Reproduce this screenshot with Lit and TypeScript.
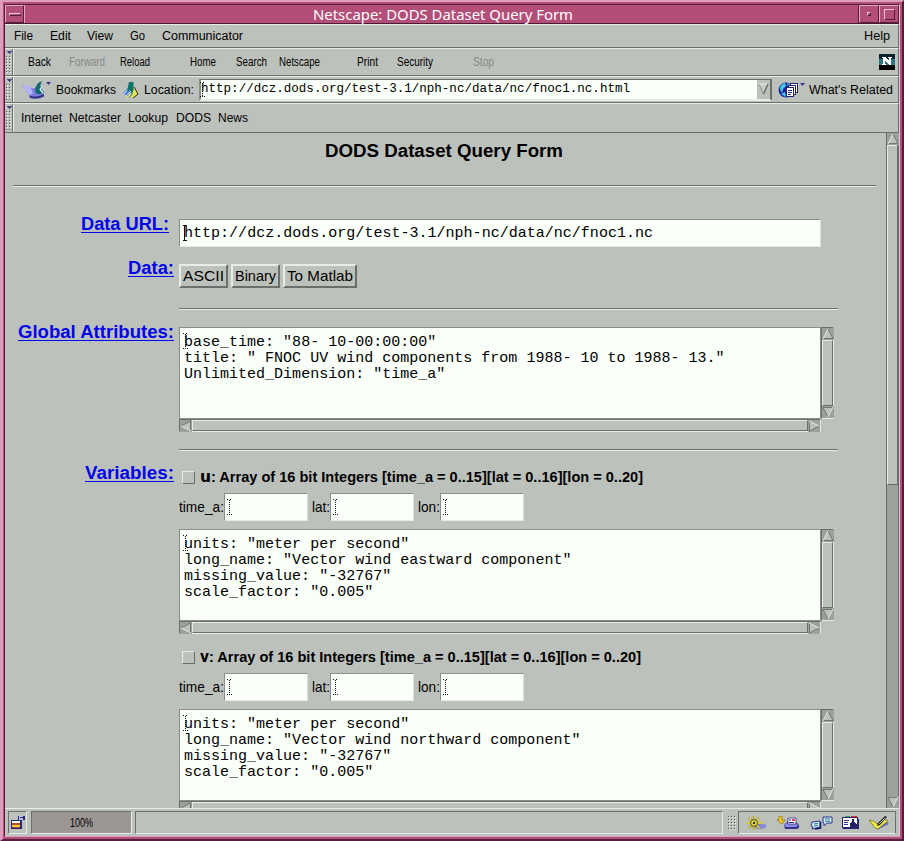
import { LitElement, html, svg, css } from "lit";
import { customElement, property } from "lit/decorators.js";
import { styleMap } from "lit/directives/style-map.js";

/** A single line of text set to an exact advance width. */
@customElement("fit-text")
class FitText extends LitElement {
  @property({ type: Number }) w = 0;
  @property() text = "";
  static styles = css`
    :host { display: inline-block; white-space: pre; flex: none; overflow: visible; text-align: left; }
    .run { display: inline-block; transform-origin: 0 50%; }
  `;
  updated() {
    const run = this.renderRoot.querySelector(".run") as HTMLElement;
    this.style.width = this.w + "px";
    run.style.transform = "none";
    const n = run.getBoundingClientRect().width;
    if (n) run.style.transform = `scaleX(${this.w / n})`;
  }
  render() {
    return html`<span class="run">${this.text}</span>`;
  }
}

const t = (text: string, w: number, cls = "") =>
  html`<fit-text class=${cls} .text=${text} .w=${w}></fit-text>`;

const arrow = (dir: number) => html`<svg width="12" height="12" viewBox="0 0 12 12">
  <rect width="12" height="12" fill="#9da19c"/>
  <g transform="rotate(${dir} 6 6)">
    <path d="M6 1 L11 11 H1Z" fill="#bdc1bb"/>
    <path d="M6 1 L11 10.500 H1" stroke="#737772" fill="none"/>
    <path d="M6 1 L1 11" stroke="#e4e8e2" fill="none"/>
  </g></svg>`;

const beam = (h: number) => html`<svg class="beam" width="5" height=${h} viewBox="0 0 5 ${h}" shape-rendering="crispEdges">
  <path d="M0 .5H2M3 .5H5M0 ${h - 0.5}H5M2.5 1V${h - 1}" stroke="#111" stroke-dasharray="1 1" fill="none"/></svg>`;

const hardBeam = html`<svg class="beam" width="5" height="16" viewBox="0 0 5 16" shape-rendering="crispEdges">
  <path d="M0 .5H4M0 15.5H4M1.500 0V16" stroke="#111" fill="none"/></svg>`;

const grip = (h: number) => html`<svg class="grip" width="9" height=${h} viewBox="0 0 9 ${h}" shape-rendering="crispEdges">
  <path d="M1 2H7L4 5Z" fill="#46468c"/>
  ${[1, 4].map((x) => svg`<path d="M${x + 0.5} 7V${h - 2}" stroke="#555955" stroke-dasharray="1 2"/><path d="M${x + 1.5} 8V${h - 2}" stroke="#eef2ec" stroke-dasharray="1 2"/>`)}
  <path d="M7.5 0V${h}" stroke="#6b6f6b"/><path d="M8.5 0V${h}" stroke="#e8ece6"/></svg>`;

const bookmarks = html`<svg width="30" height="20" viewBox="0 0 30 20">
  <path d="M0 5L8 7Q10 9 13 8L18 5L22 14Q15 19 8 16L4 11Z" fill="#7f7fe2"/>
  <path d="M0 5L8 6.500L11 13L8 15L4 11Z" fill="#b4b4fa"/>
  <path d="M7 15.500Q15 18 22 14V16.500Q15 20 8 18Z" fill="#34348c"/>
  <path d="M13 10Q14 3 20 1L17.500 7L22 4L19 9L22 12L19 14Q13 15 13 10Z" fill="#0e6b70"/>
  <path d="M21 5L18 9.500L21 13" fill="none" stroke="#e8f4f4" stroke-width="1.200"/>
  <path d="M24 2H29L26.500 5Z" fill="#34348c"/></svg>`;

const locationIcon = html`<svg width="16" height="18" viewBox="0 0 16 18">
  <path d="M7 5L11 5L15 13L10 17L6 15Z" fill="#eee84a"/>
  <path d="M0 12L5 7L10 13L6 17Z" fill="#4c7cdc"/>
  <path d="M1 13L5 8M3 15L8 10" stroke="#dceaff" stroke-width="1"/>
  <path d="M4 17L8 12" stroke="#eee84a" stroke-width="1.500"/>
  <path d="M6 1H10.500V9L9 13L7 9L4 10Z" fill="#08746c"/>
  <path d="M11 6L15 13L10 17" stroke="#222" fill="none"/></svg>`;

const related = html`<svg width="28" height="18" viewBox="0 0 28 18">
  <circle cx="8" cy="9" r="7.500" fill="#2424a0"/>
  <path d="M2 8Q2 3 7 2L8 5L5 8L4 12Z" fill="#3ecbe0"/><path d="M9 2L13 4L10 6Z" fill="#3ecbe0"/>
  <path d="M3 13L7 11L8 16Z" fill="#3ecbe0"/>
  <g fill="#fff" stroke="#25256c" shape-rendering="crispEdges">
    <rect x="12.500" y="2.500" width="7" height="9"/><rect x="10.500" y="4.500" width="7" height="9"/><rect x="8.500" y="6.500" width="7" height="9"/>
    <path d="M10 9.500H14M10 11.500H14M10 13.500H13"/>
  </g>
  <path d="M22 2H27L24.500 5Z" fill="#34348c"/></svg>`;

const logo = html`<svg width="16" height="16" viewBox="0 0 16 16" shape-rendering="crispEdges">
  <rect width="16" height="16" fill="#06222c"/><path d="M0 5H16V11H0Z" fill="#2d7580"/><path d="M0 11H16V16H0Z" fill="#000"/>
  <path d="M3 3H7L10 7V4H9V3H13V4H12V11H10L6 6V10H7V11H3V10H4V4H3Z" fill="#fff"/></svg>`;

const lock = html`<svg width="17" height="15" viewBox="0 0 17 15" shape-rendering="crispEdges">
  <path d="M9 6V2H14V5" fill="none" stroke="#26267c" stroke-width="2"/><path d="M9.500 5V1.500H13" fill="none" stroke="#b9c6ff"/>
  <rect x="1" y="5" width="11" height="9" fill="#26267c"/><rect x="2" y="6" width="8" height="2" fill="#fff"/>
  <rect x="2" y="8" width="8" height="2" fill="#c04a28"/><rect x="2" y="10" width="8" height="2" fill="#ecd040"/><rect x="2" y="12" width="8" height="1" fill="#b04020"/></svg>`;

const navigatorIcon = html`<svg width="22" height="14" viewBox="0 0 22 14">
  <ellipse cx="15" cy="10" rx="6.500" ry="3" fill="#8a8ad8"/>
  <g stroke="#6b6618" stroke-width="2.200"><path d="M9 0V14M1 7H18M3.500 2L14.500 12M14.500 2L3.500 12"/></g>
  <g stroke="#f4ea4e" stroke-width="1.300" fill="none"><path d="M9 0V14M1 7H18M3.500 2L14.500 12M14.500 2L3.500 12"/></g>
  <circle cx="9" cy="7" r="3.500" fill="none" stroke="#6b6618"/>
  <circle cx="9" cy="7" r="1.300" fill="#333"/></svg>`;

const inboxIcon = html`<svg width="23" height="14" viewBox="0 0 23 14">
  <path d="M7 9L11 5H18L22 9V12L20 13H8Z" fill="#34348c"/><path d="M7 9L10 7H18L21 9L19 11H9Z" fill="#8c8ce4"/>
  <path d="M11 2H19V8H11Z" fill="#fff" stroke="#34348c" stroke-width=".8"/>
  <path d="M15 3H18V5H15Z" fill="#df3b69"/><path d="M12 4H14M12 6.500H17" stroke="#34348c"/>
  <path d="M2 0H5V4H8L5 8L0 4H2Z" fill="#f7cd23" stroke="#7c5b00" stroke-width=".6"/></svg>`;

const newsIcon = html`<svg width="23" height="14" viewBox="0 0 23 14">
  <path d="M2 6L10 5V11L6 12L2 13L3 11L1 10Z" fill="#cfe9ff" stroke="#34348c"/>
  <path d="M4 8L8 7.500M4 10L8 9.500" stroke="#247c80"/><path d="M10.500 6V12L5 13" stroke="#171766" fill="none" stroke-width="1.500"/>
  <path d="M13 1H22V7H17L14 10V7H13Z" fill="#cfe9ff" stroke="#34348c"/><path d="M15 3H20M15 5.300H20" stroke="#247c80"/></svg>`;

const addressIcon = html`<svg width="17" height="13" viewBox="0 0 17 13" shape-rendering="crispEdges">
  <path d="M3 0H8V2H3Z" fill="#3ca070"/><path d="M9 0H15V2H9Z" fill="#e52828"/>
  <rect x=".5" y="1.500" width="15" height="10" fill="#fff" stroke="#26266c"/><path d="M1 12.500H17M16.500 3V12" stroke="#26266c"/>
  <path d="M2 4.500H7M2 6.500H6M2 8.500H6" stroke="#3434a0"/><path d="M10 3H12V6H13L15 9V11H8V9L9 6H10Z" fill="#222264"/></svg>`;

const composerIcon = html`<svg width="21" height="14" viewBox="0 0 21 14">
  <path d="M6 11L9 13.500L20 8L17 5Z" fill="#6a6ac4"/>
  <path d="M0 4L5 5L8 8L15 3L19 5L9 13L6 12Z" fill="#eee844" stroke="#51501a" stroke-width=".6"/>
  <path d="M8 10L9 7L16 0L18 1L11 9Z" fill="#222"/><path d="M10 8L16 2" stroke="#eee" stroke-width=".8"/></svg>`;

const vScroll = () => html`<div class="vs">${arrow(0)}<i class="thumb"></i>${arrow(180)}</div>`;
const hScroll = () => html`<div class="hsb">${arrow(270)}<i class="thumb"></i>${arrow(90)}</div>`;

const textArea = (lines: string[]) => html`<div class="area">
  <div class="areatop"><div class="text">${beam(16)}${lines.map((l) => html`<div class="line">${t(l, l.length * 9.01)}</div>`)}</div>${vScroll()}</div>
  ${hScroll()}</div>`;

const dims = html`<div class="dims">
  ${t("time_a:", 45)}<span class="small">${beam(16)}</span>
  ${t("lat:", 18, "gap")}<span class="small">${beam(16)}</span>
  ${t("lon:", 22, "gap")}<span class="small">${beam(16)}</span></div>`;

const variable = (name: string, nameW: number, direction: string) => html`
  <div class="var"><span class="check"></span>${t(name, nameW, "vname")}${t(": Array of 16 bit Integers [time_a = 0..15][lat = 0..16][lon = 0..20]", 432, "vdesc")}</div>
  ${dims}
  ${textArea(['units: "meter per second"', `long_name: "Vector wind ${direction} component"`, 'missing_value: "-32767"', 'scale_factor: "0.005"'])}`;

/** Items are laid out left to right: [label, start, width]. */
type Item = [string, number, number, boolean?];
const run = (items: Item[], from: number) => {
  let x = from;
  return items.map(([label, start, w, off]) => {
    const gap = start - x;
    x = start + w;
    return html`<span class=${off ? "off" : ""} style=${styleMap({ marginLeft: gap + "px" })}>${t(label, w)}</span>`;
  });
};

@customElement("app-root")
class AppRoot extends LitElement {
  static styles = css`
    * { box-sizing: border-box; }
    :host { display: block; width: 904px; height: 841px; overflow: hidden; background: #b34e78; color: #000;
      font: 12px/16px "Liberation Sans", Arial, sans-serif; }
    svg { display: block; flex: none; }
    .frame { width: 904px; height: 841px; border: solid; border-width: 2px 2px 2px 3px;
      border-color: #dca0bc #561e3c #561e3c #dc9cba; background: #b34e78; }
    .win { width: 896px; height: 833px; margin: 2px 0 0 1px; border: solid; border-width: 1px; border-color: #561e3c #ecc4d6 #dca0bc #561e3c;
      display: flex; flex-direction: column; background: #bdc1bb; }
    .title { height: 19px; flex: none; display: flex; background: #b34e78; color: #fff; border-bottom: 1px solid #4c1c34;
      font: 14px/19px "Noto Sans", sans-serif; }
    .title .name { flex: 1; display: flex; padding-left: 288px; border-left: 1px solid #e3aac4; border-right: 1px solid #561e3c; }
    .tb { width: 19px; flex: none; border: 1px solid; border-color: #e3aac4 #561e3c #561e3c #e3aac4; display: grid; place-items: center; }
    .tb.r { width: 20px; }
    .dash { width: 12px; height: 3px; border: 1px solid; border-color: #f0c6d8 #561e3c #561e3c #f0c6d8; }
    .dot { width: 4px; height: 4px; border: 1px solid; border-color: #f0c6d8 #561e3c #561e3c #f0c6d8; }
    .max { width: 11px; height: 11px; border: 1px solid; border-color: #f0c6d8 #561e3c #561e3c #f0c6d8; }
    .bar { flex: none; display: flex; align-items: center; border-top: 1px solid #e8ece6; border-bottom: 1px solid #6b6f6b; border-right: 1px solid #6b6f6b; }
    .menu { height: 24px; }
    .tools { height: 28px; } .loc { height: 27px; } .pers { height: 30px; }
    .off { color: #858984; }
    .fill { flex: 1; }
    .url { width: 573px; height: 22px; display: flex; align-items: center; background: #fbfffa; border: solid; border-width: 1px 2px 2px 2px; border-color: #6b6f6b #6b6f6b #e8ece6 #8b8f8a;
      font: 12.5px/18px "Liberation Mono", monospace; position: relative; }
    .url .beam { left: -1px; top: 2px; }
    .drop { margin-left: auto; width: 13px; height: 19px; background: #bdc1bb; display: grid; place-items: center; }
    .body { flex: 1; min-height: 0; display: flex; }
    .page { width: 881px; overflow: hidden; }
    .heading { height: 52px; padding: 7px 0 0 320px; font: bold 18px/22px "Liberation Sans", sans-serif; }
    .rule { height: 2px; border-top: 1px solid #6b6f6b; border-bottom: 1px solid #e8ece6; }
    .page > .rule { margin: 0 10px 0 8px; }
    .grid { display: grid; grid-template-columns: 169px 659px; column-gap: 5px; padding-top: 26px; }
    .lab { display: flex; justify-content: flex-end; font: bold 18px/22px "Liberation Sans", sans-serif; color: #0404ea; }
    .lab.first { padding-right: 5px; }
    .lab a { display: flex; height: 20px; border-bottom: 1px solid #0404ea; }
    .r1 { height: 44px; padding-top: 6px; }
    .r2 { height: 64px; padding-top: 7px; }
    .r2 .rule { margin-top: 20px; }
    .r3 { height: 141px; padding-top: 6px; }
    .r3 .rule { margin-top: 17px; }
    .sep { height: 8px; }
    .big { width: 642px; height: 28px; background: #fbfffa; border: 1px solid #8b8f8a; border-right-color: #dde1db; border-bottom-color: #e8ece6;
      font: 15px/28px "Liberation Mono", monospace; padding-left: 4px; position: relative; display: flex; }
    .beam { position: absolute; left: 3px; top: 5px; }
    .btns { display: flex; gap: 3px; height: 24px; font-size: 15px; line-height: 20px; }
    .btn { border: 2px solid; border-color: #e8ece6 #6b6f6b #6b6f6b #e8ece6; padding: 0 2px; height: 24px; display: flex; }
    .area { width: 655px; height: 105px; }
    .areatop { display: flex; height: 92px; }
    .text { position: relative; width: 642px; background: #fbfffa; border: 1px solid #8b8f8a; padding: 7px 0 0 4px; font: 15px/16px "Liberation Mono", monospace; }
    .line { height: 16px; display: flex; }
    .vs { width: 13px; border: 1px solid #6b6f6b; border-right-color: #e8ece6; border-bottom-color: #e8ece6; background: #9da19c; display: flex; flex-direction: column; }
    .hsb { width: 642px; height: 13px; border: 1px solid #6b6f6b; border-right-color: #e8ece6; border-bottom-color: #e8ece6; background: #9da19c; display: flex; }
    .thumb { flex: 1; background: #bdc1bb; border: 1px solid; border-color: #e8ece6 #6b6f6b #6b6f6b #e8ece6; }
    .var { height: 31px; display: flex; align-items: baseline; font-weight: bold; font-size: 14.500px; line-height: 24px; padding: 3px 0 0 3px; }
    .vname { font: bold 16.500px/24px "DejaVu Sans", sans-serif; margin-left: 5px; }
    .check { width: 13px; height: 13px; align-self: flex-start; margin-top: 6px; border: 1px solid; border-color: #e8ece6 #6b6f6b #6b6f6b #e8ece6; }
    .dims { display: flex; height: 28px; margin-bottom: 8px; font-size: 15px; line-height: 28px; }
    .small { position: relative; width: 84px; height: 28px; background: #fbfffa; border: 1px solid #8b8f8a; border-right-color: #dde1db; border-bottom-color: #e8ece6; }
    .small .beam { left: 2px; top: 5px; }
    .gap { margin-left: 4px; }
    .main { width: 13px; border: 1px solid #6b6f6b; border-width: 0 1px; background: #9da19c; display: flex; flex-direction: column; }
    .main .thumb { flex: none; height: 340px; }
    .status { flex: none; height: 28px; border-top: 1px solid #e8ece6; display: flex; align-items: center; padding: 0 3px; }
    .cell { height: 23px; border: 1px solid; border-color: #6b6f6b #e8ece6 #e8ece6 #6b6f6b; display: flex; align-items: center; }
    .sec { width: 19px; padding-left: 1px; }
    .prog { width: 101px; margin-left: 4px; background: #9b9593; padding-left: 38px; }
    .msg { width: 588px; margin-left: 3px; }
    .dots { margin-left: 4px; }
    .icons { flex: 1; display: flex; justify-content: space-between; padding: 0 5px 0 6px; border-color: #6b6f6b #6b6f6b #e8ece6 #6b6f6b; }
    .s3 { width: 3px; } .s5 { width: 5px; } .s6 { width: 6px; } .s7 { width: 7px; } .s8 { width: 8px; }
  `;
  render() {
    return html`<div class="frame"><div class="win">
      <div class="title">
        <span class="tb"><i class="dash"></i></span>
        <span class="name">${t("Netscape: DODS Dataset Query Form", 260)}</span>
        <span class="tb r"><i class="dot"></i></span><span class="tb r"><i class="max"></i></span>
      </div>
      <div class="bar menu">${run([["File", 14, 19], ["Edit", 50, 21], ["View", 87, 26], ["Go", 130, 15], ["Communicator", 162, 81], ["Help", 864, 26]], 5)}</div>
      <div class="bar tools">${grip(26)}${run([["Back", 28, 23], ["Forward", 69, 36, true], ["Reload", 120, 30], ["Home", 190, 26], ["Search", 236, 31], ["Netscape", 279, 41], ["Print", 357, 21], ["Security", 397, 36], ["Stop", 473, 21, true]], 14)}
        <span class="fill"></span>${logo}<span class="s3"></span></div>
      <div class="bar loc">${grip(25)}<span class="s8"></span>${bookmarks}${run([["Bookmarks", 56, 60]], 52)}
        <span class="s7"></span>${locationIcon}${run([["Location:", 144, 50]], 139)}<span class="s5"></span>
        <span class="url">${beam(15)}${t("http://dcz.dods.org/test-3.1/nph-nc/data/nc/fnoc1.nc.html", 429)}
          <span class="drop"><svg width="11" height="12" viewBox="0 0 11 12"><path d="M10 1L5.500 11L1 1Z" fill="#c9cdc7"/><path d="M1 1L5.500 11" stroke="#8b8f8a"/><path d="M1 1H10" stroke="#eef2ec"/><path d="M10 1L5.500 11" fill="none" stroke="#6b6f6b" stroke-width="1.500"/></svg></span></span>
        <span class="s6"></span>${related}${run([["What's Related", 809, 84]], 806)}</div>
      <div class="bar pers">${grip(28)}${run([["Internet", 21, 41], ["Netcaster", 69, 52], ["Lookup", 128, 40], ["DODS", 176, 35], ["News", 218, 30]], 14)}</div>
      <div class="body">
        <div class="page">
          <div class="heading">${t("DODS Dataset Query Form", 238)}</div>
          <div class="rule"></div>
          <div class="grid">
            <div class="lab first"><a>${t("Data URL:", 88)}</a></div>
            <div class="r1"><div class="big">${hardBeam}${t("http://dcz.dods.org/test-3.1/nph-nc/data/nc/fnoc1.nc", 469)}</div></div>
            <div class="lab"><a>${t("Data:", 46)}</a></div>
            <div class="r2"><div class="btns">
              <span class="btn">${t("ASCII", 41)}</span><span class="btn">${t("Binary", 41)}</span><span class="btn">${t("To Matlab", 66)}</span></div>
              <div class="rule"></div></div>
            <div class="lab"><a>${t("Global Attributes:", 156)}</a></div>
            <div class="r3">${textArea(['base_time: "88- 10-00:00:00"', 'title: " FNOC UV wind components from 1988- 10 to 1988- 13."', 'Unlimited_Dimension: "time_a"'])}
              <div class="rule"></div></div>
            <div class="lab"><a>${t("Variables:", 89)}</a></div>
            <div>${variable("u", 11, "eastward")}<div class="sep"></div>${variable("v", 9, "northward")}</div>
          </div>
        </div>
        <div class="main">${arrow(0)}<i class="thumb"></i><span class="fill"></span>${arrow(180)}</div>
      </div>
      <div class="status">
        <span class="cell sec">${lock}</span>
        <span class="cell prog">${t("100%", 23)}</span>
        <span class="cell msg"></span>
        <svg class="dots" width="11" height="20" viewBox="0 0 11 20" shape-rendering="crispEdges">
          ${[1, 4, 7].map((x) => svg`<path d="M${x + 0.5} 3V17" stroke="#555955" stroke-dasharray="1 2"/><path d="M${x + 1.5} 4V18" stroke="#eef2ec" stroke-dasharray="1 2"/>`)}</svg>
        <span class="cell icons">${navigatorIcon}${inboxIcon}${newsIcon}${addressIcon}${composerIcon}</span>
      </div>
    </div></div>`;
  }
}
